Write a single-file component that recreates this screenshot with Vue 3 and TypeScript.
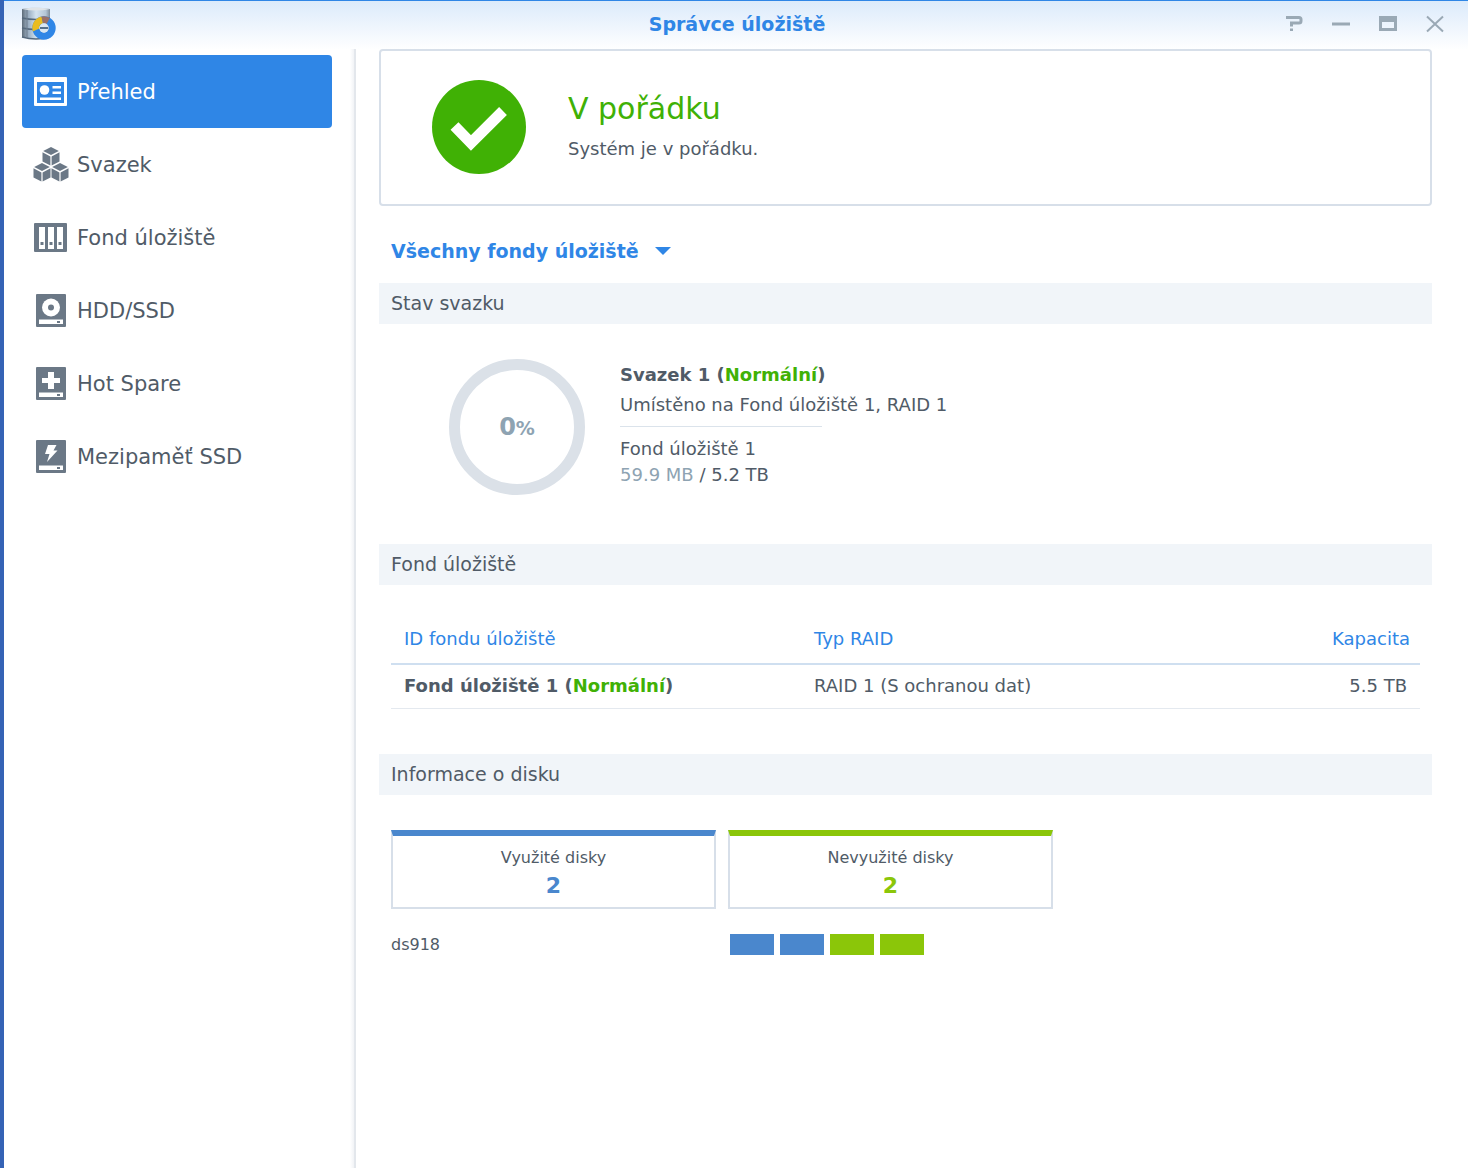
<script setup lang="ts">
import { ref } from 'vue'

interface NavItem {
  id: string
  label: string
}

interface Tile {
  label: string
  count: number
  tone: 'used' | 'free'
}

const navItems: NavItem[] = [
  { id: 'overview', label: 'Přehled' },
  { id: 'volume', label: 'Svazek' },
  { id: 'pool', label: 'Fond úložiště' },
  { id: 'disk', label: 'HDD/SSD' },
  { id: 'spare', label: 'Hot Spare' },
  { id: 'cache', label: 'Mezipaměť SSD' },
]

const tiles: Tile[] = [
  { label: 'Využité disky', count: 2, tone: 'used' },
  { label: 'Nevyužité disky', count: 2, tone: 'free' },
]

const bays: Tile['tone'][] = ['used', 'used', 'free', 'free']

const active = ref('overview')
const pool = ref('all')
</script>

<template>
  <div class="window">
    <header class="titlebar">
      <svg class="app-icon" viewBox="0 0 36 36" aria-hidden="true">
        <defs>
          <linearGradient id="metal" x1="0" x2="1">
            <stop offset="0" stop-color="#5d6b78" />
            <stop offset="0.12" stop-color="#8495a5" />
            <stop offset="0.25" stop-color="#9fb3c6" />
            <stop offset="0.5" stop-color="#d3e2ee" />
            <stop offset="0.85" stop-color="#b4c6d6" />
            <stop offset="1" stop-color="#7c8b99" />
          </linearGradient>
        </defs>
        <path d="M2 3Q16 0 30 3V31Q16 35 2 31Z" fill="url(#metal)" />
        <path d="M2 3Q16 0 30 3Q16 6 2 3Z" fill="#dfe4e8" />
        <path d="M2 12Q16 15 30 12M2 22Q16 25 30 22M2 31Q16 35 30 31" fill="none" stroke="#56697c" stroke-width="1.4" />
        <path d="M7 4V32" stroke="#6e7f8f" stroke-width="1" />
        <circle cx="24" cy="22" r="8.200" fill="none" stroke="#2f86e6" stroke-width="7" />
        <path d="M12.900 25.500A11.700 11.700 0 0 1 21.500 10.500L23 17.300A4.800 4.800 0 0 0 19.300 22.500Z" fill="#e9bc20" />
        <path d="M21.500 10.500A11.700 11.700 0 0 1 30 11.900L26.500 17.900A4.800 4.800 0 0 0 23 17.300Z" fill="#9a7168" />
        <circle cx="24" cy="22" r="4.700" fill="#d8e6f2" />
        <path d="M20 22H28" stroke="#33516f" stroke-width="1.600" />
      </svg>
      <h1 class="title">Správce úložiště</h1>
      <div class="controls">
        <button type="button" aria-label="Nápověda">
          <svg viewBox="0 0 18 18"><path d="M1 2.500H14Q16 2.500 16 4.500V6Q16 8 14 8H6.500V11.500M6.500 13.500V16" /></svg>
        </button>
        <button type="button" aria-label="Minimalizovat">
          <svg viewBox="0 0 18 18"><path d="M0 9H18" /></svg>
        </button>
        <button type="button" aria-label="Maximalizovat">
          <svg viewBox="0 0 18 18"><path d="M0 1H18V16H0ZM3 7V13H15V7Z" class="solid" /></svg>
        </button>
        <button type="button" aria-label="Zavřít">
          <svg viewBox="0 0 18 18"><path d="M1 1.500L17 16.500M17 1.500L1 16.500" class="thin" /></svg>
        </button>
      </div>
    </header>

    <div class="body">
      <nav class="sidebar">
        <button
          v-for="item in navItems"
          :key="item.id"
          type="button"
          class="nav-item"
          :class="{ active: active === item.id }"
          @click="active = item.id"
        >
          <svg class="nav-icon" viewBox="0 0 36 36" aria-hidden="true">
            <template v-if="item.id === 'overview'">
              <rect x="1" y="3" width="33" height="29" rx="1" />
              <rect x="4" y="8" width="27" height="21" class="hole" />
              <circle cx="11.500" cy="16" r="4.800" />
              <path d="M19.500 12H28V14.500H19.500ZM19.500 17.500H28V20H19.500ZM7 23.500H28V26H7Z" />
            </template>
            <template v-else-if="item.id === 'volume'">
              <g v-for="(p, i) in [[18, 0], [9, 16], [27, 16]]" :key="i" :transform="`translate(${p[0]} ${p[1]})`">
                <path d="M0 0L7.800 4L0 8L-7.800 4Z" />
                <path d="M-8.500 5.300L-0.600 9.400V18.500L-8.500 14.500Z" />
                <path d="M8.500 5.300L0.600 9.400V18.500L8.500 14.500Z" />
              </g>
            </template>
            <template v-else-if="item.id === 'pool'">
              <rect x="1" y="3" width="33" height="29" rx="1" />
              <path class="hole" d="M6 7H12V29H6ZM15 7H21V29H15ZM24 7H30V29H24Z" />
              <path d="M7.500 22H10.500V25H7.500ZM16.500 22H19.500V25H16.500ZM25.500 22H28.500V25H25.500Z" />
            </template>
            <template v-else>
              <rect x="3" y="1" width="30" height="33" rx="1" />
              <path class="hole" d="M6 26.500H30V31H6Z" />
              <path d="M24 28H27V30H24Z" />
              <template v-if="item.id === 'disk'">
                <circle class="hole" cx="18" cy="14.500" r="9" />
                <circle cx="18" cy="14.500" r="3" />
              </template>
              <path v-else-if="item.id === 'spare'" class="hole" d="M15 6H21V12H27V17H21V23H15V17H9V12H15Z" />
              <path v-else class="hole" d="M15 6H23.500L20.500 11.500H24.500L14 23L16.500 15H12Z" />
            </template>
          </svg>
          <span>{{ item.label }}</span>
        </button>
      </nav>

      <main class="content">
        <section class="status">
          <svg class="status-icon" viewBox="0 0 94 94" aria-hidden="true">
            <circle cx="47" cy="47" r="47" fill="#40b105" />
            <path d="M22.500 46L39 63L71 31" fill="none" stroke="#fff" stroke-width="11" />
          </svg>
          <div>
            <h2 class="status-title">V pořádku</h2>
            <p class="status-text">Systém je v pořádku.</p>
          </div>
        </section>

        <div class="picker">
          <select v-model="pool" aria-label="Fond úložiště">
            <option value="all">Všechny fondy úložiště</option>
          </select>
          <svg class="caret" viewBox="0 0 16 8" aria-hidden="true"><path d="M0 0H16L8 8Z" /></svg>
        </div>

        <h3 class="section-title">Stav svazku</h3>
        <section class="volume">
          <div class="ring">
            <span class="ring-value">0<small>%</small></span>
          </div>
          <div class="volume-info">
            <p class="volume-name">Svazek 1 (<span class="ok">Normální</span>)</p>
            <p class="volume-place">Umístěno na Fond úložiště 1, RAID 1</p>
            <hr />
            <p class="volume-pool">Fond úložiště 1</p>
            <p class="volume-size"><span class="muted">59.9 MB</span> / <span class="total">5.2 TB</span></p>
          </div>
        </section>

        <h3 class="section-title">Fond úložiště</h3>
        <section class="pools">
          <table>
            <thead>
              <tr>
                <th>ID fondu úložiště</th>
                <th>Typ RAID</th>
                <th class="num">Kapacita</th>
              </tr>
            </thead>
            <tbody>
              <tr>
                <td class="strong">Fond úložiště 1 (<span class="ok">Normální</span>)</td>
                <td>RAID 1 (S ochranou dat)</td>
                <td class="num">5.5 TB</td>
              </tr>
            </tbody>
          </table>
        </section>

        <h3 class="section-title">Informace o disku</h3>
        <section class="disks">
          <div v-for="tile in tiles" :key="tile.tone" class="tile" :class="tile.tone">
            <span class="tile-label">{{ tile.label }}</span>
            <span class="tile-count">{{ tile.count }}</span>
          </div>
          <span class="host">ds918</span>
          <div class="bays">
            <span v-for="(bay, i) in bays" :key="i" class="bay" :class="bay"></span>
          </div>
        </section>
      </main>
    </div>
  </div>
</template>

<style>
body {
  margin: 0;
}
</style>

<style scoped>
* {
  box-sizing: border-box;
}

.window {
  display: flex;
  flex-direction: column;
  min-height: 100vh;
  border-left: 4px solid #3563b5;
  background: linear-gradient(#dbeafb, #fff 50px);
  color: #505b67;
  font-family: Verdana, "DejaVu Sans", sans-serif;
  font-size: 18px;
  line-height: 26px;
}

h1,
h2,
h3,
p {
  margin: 0;
  font-weight: 400;
}

button {
  padding: 0;
  border: 0;
  background: none;
  color: inherit;
  font: inherit;
  cursor: pointer;
}

.titlebar {
  display: grid;
  grid-template-columns: 1fr auto 1fr;
  align-items: center;
  height: 49px;
  padding: 0 24px 2px 16px;
  border-top: 1px solid #2f86e6;
}

.app-icon {
  width: 36px;
  height: 36px;
}

.title {
  margin-left: 10px;
  color: #2f86e6;
  font-size: 19px;
  font-weight: 700;
}

.controls {
  display: flex;
  justify-content: flex-end;
  gap: 29px;
}

.controls button {
  display: flex;
}

.controls svg {
  width: 18px;
  height: 18px;
  fill: none;
  stroke: #9aa9b5;
  stroke-width: 3;
}

.controls .solid {
  fill: #9aa9b5;
  fill-rule: evenodd;
  stroke: none;
}

.controls .thin {
  stroke-width: 2;
}

.body {
  display: flex;
  flex: 1;
}

.sidebar {
  display: flex;
  flex-direction: column;
  flex: none;
  width: 352px;
  padding: 6px 22px 0 18px;
  border-right: 2px solid #e3e7ec;
  background: linear-gradient(to left, #f1f3f6, #fff 4px);
}

.nav-item {
  display: flex;
  align-items: center;
  gap: 8px;
  height: 73px;
  padding-left: 11px;
  border-radius: 4px;
  font-size: 21px;
  text-align: left;
}

.nav-icon {
  width: 36px;
  height: 36px;
  fill: #6b7886;
}

.nav-icon .hole {
  fill: #fff;
}

.nav-item.active {
  background: #2f86e6;
  color: #fff;
}

.active .nav-icon {
  fill: #fff;
}

.active .hole {
  fill: #2f86e6;
}

.content {
  flex: 1;
  min-width: 0;
  padding: 0 36px 0 23px;
}

.status {
  display: flex;
  align-items: center;
  gap: 42px;
  height: 157px;
  padding: 0 51px 2px;
  border: 2px solid #d7dfe9;
  border-radius: 4px;
  background: #fff;
}

.status-icon {
  width: 94px;
  height: 94px;
}

.status-title {
  padding-top: 4px;
  color: #40b105;
  font-size: 30px;
  line-height: 40px;
}

.status-text {
  line-height: 40px;
}

.picker {
  display: flex;
  align-items: center;
  height: 77px;
  padding: 13px 12px 0;
}

.picker select {
  margin: 0 -32px 0 0;
  padding: 0 48px 0 0;
  border: 0;
  background: none;
  color: #2f86e6;
  font: inherit;
  font-size: 19px;
  font-weight: 700;
  appearance: none;
}

.caret {
  width: 16px;
  height: 8px;
  fill: #2f86e6;
  pointer-events: none;
}

.section-title {
  padding: 0 12px;
  background: #f1f5f9;
  font-size: 19px;
  line-height: 41px;
}

.volume {
  display: flex;
  gap: 35px;
  height: 220px;
  padding: 35px 70px 0;
}

.ring {
  display: flex;
  align-items: center;
  justify-content: center;
  width: 136px;
  height: 136px;
  border: 11px solid #dbe1e8;
  border-radius: 50%;
}

.ring-value {
  color: #8ea3b2;
  font-size: 24px;
  font-weight: 700;
}

.ring-value small {
  font-size: 19px;
}

.volume-name,
.strong {
  font-weight: 700;
}

.volume-info {
  padding-top: 1px;
}

.volume-name,
.volume-place {
  line-height: 30px;
}

.volume hr {
  width: 202px;
  height: 1px;
  margin: 6px 0 9px;
  border: 0;
  background: #dbe3eb;
}

.ok {
  color: #40b105;
}

.muted {
  color: #8ea3b2;
}

.pools {
  padding: 28px 12px 45px;
}

table {
  width: 100%;
  border-collapse: collapse;
  table-layout: fixed;
}

th,
td {
  padding: 0 13px;
  text-align: left;
}

th {
  height: 51px;
  padding-top: 2px;
  border-bottom: 2px solid #cfdff0;
  color: #2f86e6;
  font-weight: 400;
}

th:first-child {
  width: 410px;
}

td {
  height: 44px;
  border-bottom: 1px solid #e4e9ef;
}

.num {
  text-align: right;
}

th.num {
  padding-right: 10px;
}

.disks {
  display: grid;
  grid-template-columns: 1fr 1fr;
  gap: 23px 12px;
  max-width: 686px;
  padding: 35px 12px;
  font-size: 16px;
}

.tile {
  display: flex;
  flex-direction: column;
  align-items: center;
  height: 79px;
  padding-top: 9px;
  border: 2px solid #d7dfe9;
  border-top-width: 6px;
}

.tile.used {
  border-top-color: #4a87cd;
}

.tile.free {
  border-top-color: #8bc609;
}

.tile-count {
  font-size: 22px;
  font-weight: 700;
  line-height: 30px;
}

.used .tile-count {
  color: #4a87cd;
}

.free .tile-count {
  color: #8bc609;
}

.bays {
  display: flex;
  align-items: center;
  gap: 6px;
  padding-left: 2px;
}

.bay {
  width: 44px;
  height: 21px;
}

.bay.used {
  background: #4a87cd;
}

.bay.free {
  background: #8bc609;
}
</style>
